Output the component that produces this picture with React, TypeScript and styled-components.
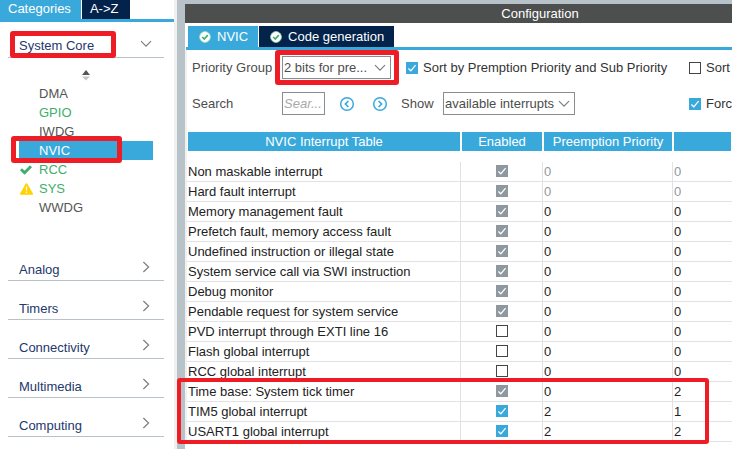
import React, { useState } from "react";
import styled, { createGlobalStyle, css } from "styled-components";

const blue = "#39a9dc";
const navy = "#03234b";
const steel = "#b8c2c9";

const GlobalStyle = createGlobalStyle`
  * { box-sizing: border-box; }
  body {
    margin: 0;
    background: #fff;
    color: #333;
    font: 13px/19px "Liberation Sans", Arial, sans-serif;
  }
  button, input, select { font: inherit; color: inherit; margin: 0; }
`;

const Layout = styled.div`
  display: flex;
  min-height: 100vh;
`;

const Sidebar = styled.aside`
  flex: 0 0 177px;
  border-right: 3px solid #f0f0f0;
`;

const Splitter = styled.div`
  flex: 0 0 8px;
  background: ${steel};
`;

const Main = styled.main`
  flex: 1;
  min-width: 0;
  border-top: 4px solid ${steel};
`;

const TabBar = styled.div<{ $inset?: boolean }>`
  display: flex;
  gap: 1px;
  border-bottom: 3px solid ${blue};
  ${(p) => p.$inset && css`
    padding: 3px 0 0 2px;
    margin-left: 1px;
  `}
`;

const Tab = styled.button<{ $active?: boolean; $tall?: boolean }>`
  display: flex;
  align-items: center;
  gap: 6px;
  min-width: 48px;
  height: ${(p) => (p.$tall ? 21 : 19)}px;
  padding: ${(p) => (p.$tall ? "0 10px 0 11px" : "0 10px 2px 8px")};
  border: 0;
  background: ${(p) => (p.$active ? blue : navy)};
  color: #fff;
  white-space: nowrap;
`;

const Category = styled.button<{ $open?: boolean }>`
  position: relative;
  display: flex;
  justify-content: space-between;
  align-items: center;
  width: 156px;
  height: ${(p) => (p.$open ? 36 : 39)}px;
  margin-left: 8px;
  padding: ${(p) => (p.$open ? "12px 12px 0 11px" : "16px 14px 0 11px")};
  border: 0;
  border-bottom: 1px solid ${steel};
  background: none;
  color: #24386c;
  svg { margin-bottom: 4px; }
`;

const SortButton = styled.button`
  display: block;
  margin: 12px 0 3px 81px;
  padding: 0;
  border: 0;
  background: none;
  line-height: 0;
`;

const PeripheralList = styled.ul`
  list-style: none;
  margin: 0 21px 25px 19px;
  padding: 0;
`;

const Peripheral = styled.li<{ $tone?: "green" | "selected" }>`
  position: relative;
  display: grid;
  grid-template-columns: 20px 1fr;
  align-items: center;
  height: 19px;
  color: #555;
  ${(p) => p.$tone === "green" && css`color: #3fae6a;`}
  ${(p) => p.$tone === "selected" && css`
    color: #fff;
    background: ${blue};
  `}
  svg { display: block; }
`;

const Highlight = styled.span<{ $box: string }>`
  position: absolute;
  inset: ${(p) => p.$box};
  border: 5px solid #ee1c25;
  border-radius: 3px;
  pointer-events: none;
`;

const TableHighlight = styled.span`
  position: absolute;
  left: -10px;
  bottom: -2px;
  width: 532px;
  height: 66px;
  border: 4px solid #ee1c25;
  border-radius: 3px;
  pointer-events: none;
`;

const PanelTitle = styled.h1`
  margin: 0;
  padding-left: 163px;
  height: 19px;
  background: #4d4f4f;
  color: #fff;
  font-size: 13px;
  font-weight: 400;
  text-align: center;
`;

const PanelBody = styled.div`
  border-left: 2px solid #f0f0f0;
`;

const Controls = styled.div`
  display: grid;
  grid-template-columns: 90px 407px 1fr;
  row-gap: 13px;
  padding: 6px 0 17px 5px;
  color: #4c4c4c;
`;

const Group = styled.div`
  display: flex;
  align-items: center;
  height: 23px;
`;

const FieldLabel = styled.label`
  line-height: 23px;
  white-space: nowrap;
`;

const SelectWrap = styled.div<{ $width: number }>`
  position: relative;
  width: ${(p) => p.$width}px;
  height: 23px;
  > svg {
    position: absolute;
    right: 5px;
    top: 8px;
    pointer-events: none;
  }
`;

const Select = styled.select`
  appearance: none;
  width: 100%;
  height: 100%;
  padding: 0 0 0 1px;
  border: 1px solid #868e94;
  border-radius: 0;
  background: #fff;
`;

const SearchInput = styled.input`
  width: 43px;
  height: 23px;
  padding: 0 1px;
  border: 1px solid #868e94;
  &::placeholder { color: #a8a8a8; font-style: italic; opacity: 1; }
`;

const IconButton = styled.button`
  width: 16px;
  height: 16px;
  margin-left: 14px;
  padding: 0;
  border: 0;
  background: none;
  line-height: 0;
  & + & { margin-left: 17px; }
`;

const ShowLabel = styled.label`
  width: 42px;
  margin-left: 13px;
`;

const CheckLabel = styled.label`
  display: flex;
  align-items: center;
  gap: 5px;
  color: #333;
  white-space: nowrap;
  ${SelectWrap} + & { margin-left: 15px; }
`;

const CheckBox = styled.span`
  position: relative;
  display: inline-block;
  width: 12px;
  height: 12px;
  svg { position: absolute; left: 0; top: 0; pointer-events: none; }
`;

const CheckInput = styled.input`
  appearance: none;
  display: block;
  width: 12px;
  height: 12px;
  border: 1px solid #444;
  background: #fff;
  &:checked { border-color: ${blue}; background: ${blue}; }
  &:disabled { border-color: #8f989e; background: #8f989e; }
`;

const TableArea = styled.div`
  position: relative;
`;

const Table = styled.table`
  width: 100%;
  table-layout: fixed;
  border-collapse: separate;
  border-spacing: 0;
  thead::after { content: ""; display: block; height: 11px; }
`;

const Head = styled.th`
  height: 19px;
  padding: 0;
  border: solid #fff;
  border-width: 0 1px;
  background: ${blue};
  color: #fff;
  font-weight: 400;
`;

const Cell = styled.td<{ $muted?: boolean; $center?: boolean }>`
  height: 20px;
  padding: 0 1px;
  border: solid #e2e2e4;
  border-width: 0 1px 1px 0;
  color: ${(p) => (p.$muted ? "#8f989e" : "#222")};
  text-align: ${(p) => (p.$center ? "center" : "left")};
  white-space: nowrap;
  line-height: 19px;
  &:last-child { border-right: 0; }
  ${CheckBox} { vertical-align: top; margin-top: 3px; }
`;

const Col = styled.col<{ $width?: number }>`
  width: ${(p) => (p.$width ? `${p.$width}px` : "auto")};
`;

const ChevronDown = () => (
  <svg width="12" height="8" viewBox="0 0 12 8" fill="none" stroke="#7d7d7d" strokeWidth="1.2">
    <path d="M1 1.2 6 6.2 11 1.2" />
  </svg>
);

const ChevronRight = () => (
  <svg width="8" height="12" viewBox="0 0 8 12" fill="none" stroke="#7d7d7d" strokeWidth="1.2">
    <path d="M1.4 1 6.6 6 1.4 11" />
  </svg>
);

const OkBadge = () => (
  <svg width="12" height="12" viewBox="0 0 12 12" fill="none">
    <circle cx="6" cy="6" r="5.4" fill="#fff" stroke="#a5dfbb" strokeWidth="0.8" />
    <path d="M3.2 6 5.3 8 8.8 4.2" stroke="#3fae6a" strokeWidth="1.7" />
  </svg>
);

const CheckMark = () => (
  <svg width="14" height="12" viewBox="0 0 14 12" fill="none">
    <path d="M2 5.2 5.6 8.8 12 2.2" stroke="#3fae6a" strokeWidth="2.8" />
  </svg>
);

const Warning = () => (
  <svg width="15" height="12" viewBox="0 0 15 12">
    <path d="M7.5 1 13.2 11H1.8Z" fill="#ffd200" stroke="#ffd200" strokeWidth="1.6" strokeLinejoin="round" />
    <path d="M7.5 3.6V7.6M7.5 8.6V9.9" stroke="#fff" strokeWidth="1.3" />
  </svg>
);

const CircleArrow = ({ next }: { next?: boolean }) => (
  <svg width="16" height="16" viewBox="0 0 16 16" fill="none" stroke={blue}>
    <circle cx="8" cy="8" r="6.3" strokeWidth="1.5" />
    <path d={next ? "M6.6 5 9.6 8 6.6 11" : "M9.4 5 6.4 8 9.4 11"} strokeWidth="1.7" />
  </svg>
);

type CheckProps = { initial: boolean; disabled?: boolean; label?: string };

function Check({ initial, disabled, label }: CheckProps) {
  const [on, setOn] = useState(initial);
  return (
    <CheckBox>
      <CheckInput
        type="checkbox"
        aria-label={label}
        checked={on}
        disabled={disabled}
        onChange={(e) => setOn(e.target.checked)}
      />
      {on && (
        <svg width="12" height="12" viewBox="0 0 12 12" fill="none" stroke="#fff" strokeWidth="1.3">
          <path d="M2.4 6.6 4.8 8.8 9.6 3.2" />
        </svg>
      )}
    </CheckBox>
  );
}

type Interrupt = { name: string; on: boolean; locked?: boolean; muted?: boolean; pre: number; sub: number };

const interrupts: Interrupt[] = [
  { name: "Non maskable interrupt", on: true, locked: true, muted: true, pre: 0, sub: 0 },
  { name: "Hard fault interrupt", on: true, locked: true, muted: true, pre: 0, sub: 0 },
  { name: "Memory management fault", on: true, locked: true, pre: 0, sub: 0 },
  { name: "Prefetch fault, memory access fault", on: true, locked: true, pre: 0, sub: 0 },
  { name: "Undefined instruction or illegal state", on: true, locked: true, pre: 0, sub: 0 },
  { name: "System service call via SWI instruction", on: true, locked: true, pre: 0, sub: 0 },
  { name: "Debug monitor", on: true, locked: true, pre: 0, sub: 0 },
  { name: "Pendable request for system service", on: true, locked: true, pre: 0, sub: 0 },
  { name: "PVD interrupt through EXTI line 16", on: false, pre: 0, sub: 0 },
  { name: "Flash global interrupt", on: false, pre: 0, sub: 0 },
  { name: "RCC global interrupt", on: false, pre: 0, sub: 0 },
  { name: "Time base: System tick timer", on: true, locked: true, pre: 0, sub: 2 },
  { name: "TIM5 global interrupt", on: true, pre: 2, sub: 1 },
  { name: "USART1 global interrupt", on: true, pre: 2, sub: 2 },
];

const categories = ["Analog", "Timers", "Connectivity", "Multimedia", "Computing"];

export default function App() {
  return (
    <>
      <GlobalStyle />
      <Layout>
        <Sidebar>
          <TabBar>
            <Tab $active>Categories</Tab>
            <Tab>A-&gt;Z</Tab>
          </TabBar>
          <Category $open aria-expanded="true">
            System Core
            <ChevronDown />
            <Highlight $box="9px 48px -1px 2px" />
          </Category>
          <SortButton aria-label="Sort">
            <svg width="10" height="11" viewBox="0 0 10 11">
              <path d="M5 0 9 5H1Z" fill="#555" />
              <path d="M1 6.4H9L5 10.6Z" fill="#c4c4c4" />
            </svg>
          </SortButton>
          <PeripheralList>
            <Peripheral><span />DMA</Peripheral>
            <Peripheral $tone="green"><span />GPIO</Peripheral>
            <Peripheral><span />IWDG</Peripheral>
            <Peripheral $tone="selected">
              <span />NVIC
              <Highlight $box="-5px 31px -3px -8px" />
            </Peripheral>
            <Peripheral $tone="green"><CheckMark />RCC</Peripheral>
            <Peripheral $tone="green"><Warning />SYS</Peripheral>
            <Peripheral><span />WWDG</Peripheral>
          </PeripheralList>
          {categories.map((name) => (
            <Category key={name} aria-expanded="false">
              {name}
              <ChevronRight />
            </Category>
          ))}
        </Sidebar>
        <Splitter />
        <Main>
          <PanelTitle>Configuration</PanelTitle>
          <TabBar $inset>
            <Tab $tall $active><OkBadge />NVIC</Tab>
            <Tab $tall><OkBadge />Code generation</Tab>
          </TabBar>
          <PanelBody>
            <Controls>
              <FieldLabel htmlFor="group">Priority Group</FieldLabel>
              <Group>
                <SelectWrap $width={109}>
                  <Select id="group"><option>2 bits for pre...</option></Select>
                  <ChevronDown />
                  <Highlight $box="-6px -8px -6px -7px" />
                </SelectWrap>
                <CheckLabel><Check initial />Sort by Premption Priority and Sub Priority</CheckLabel>
              </Group>
              <Group><CheckLabel><Check initial={false} />Sort</CheckLabel></Group>
              <FieldLabel htmlFor="search">Search</FieldLabel>
              <Group>
                <SearchInput id="search" placeholder="Sear..." />
                <IconButton aria-label="Previous"><CircleArrow /></IconButton>
                <IconButton aria-label="Next"><CircleArrow next /></IconButton>
                <ShowLabel htmlFor="show">Show</ShowLabel>
                <SelectWrap $width={132}>
                  <Select id="show"><option>available interrupts</option></Select>
                  <ChevronDown />
                </SelectWrap>
              </Group>
              <Group><CheckLabel><Check initial />Forc</CheckLabel></Group>
            </Controls>
            <TableArea>
              <Table>
                <colgroup>
                  <Col $width={274} />
                  <Col $width={82} />
                  <Col $width={130} />
                  <Col />
                </colgroup>
                <thead>
                  <tr>
                    <Head>NVIC Interrupt Table</Head>
                    <Head>Enabled</Head>
                    <Head>Preemption Priority</Head>
                    <Head />
                  </tr>
                </thead>
                <tbody>
                  {interrupts.map((row) => (
                    <tr key={row.name}>
                      <Cell>{row.name}</Cell>
                      <Cell $center><Check initial={row.on} disabled={row.locked} label={row.name} /></Cell>
                      <Cell $muted={row.muted}>{row.pre}</Cell>
                      <Cell $muted={row.muted}>{row.sub}</Cell>
                    </tr>
                  ))}
                </tbody>
              </Table>
              <TableHighlight />
            </TableArea>
          </PanelBody>
        </Main>
      </Layout>
    </>
  );
}
